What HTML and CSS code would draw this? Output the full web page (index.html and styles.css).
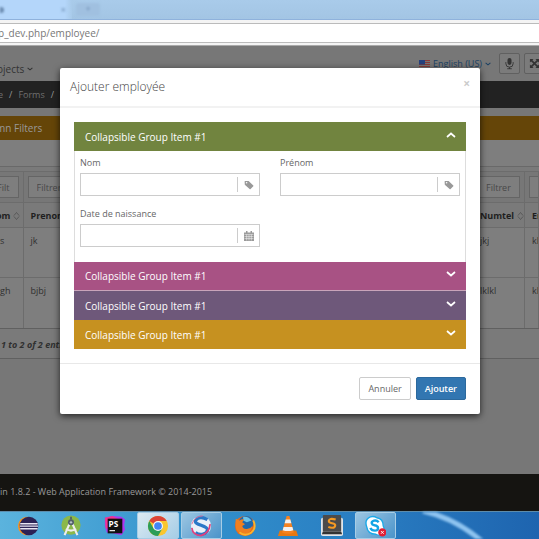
FILE: index.html
```html
<!DOCTYPE html>
<html lang="fr">
<head>
<meta charset="utf-8">
<title>Ajouter employée</title>
<link rel="stylesheet" href="styles.css">
</head>
<body>
<svg class="defs" aria-hidden="true">
  <symbol id="tag" viewBox="0 0 10 10"><path fill="currentColor" fill-rule="evenodd" d="M.6 1.6Q.6 1 1.2 1H4.6L9.3 5.4Q9.7 5.9 9.3 6.3L6.6 9Q6.1 9.4 5.6 9L.8 4.700ZM2.600 2A.8.8 0 1 0 2.600 3.600.8.8 0 0 0 2.600 2Z"/></symbol>
  <symbol id="down" viewBox="0 0 10 6"><path fill="none" stroke="currentColor" stroke-width="1.7" d="M1 1l4 3.5L9 1"/></symbol>
  <symbol id="sort" viewBox="0 0 8 10"><path fill="none" stroke="currentColor" stroke-width=".8" d="M1 4.500L4 1l3 3.500M1 5.500L4 9l3-3.500"/></symbol>
</svg>

<div class="tabs">
  <div class="tab"><span class="tab-icon"></span><span class="tab-close">×</span></div>
  <div class="new-tab">+</div>
</div>
<div class="address"><input aria-label="Adresse" value="pp_dev.php/employee/"></div>

<main class="page">
  <header class="top">
    <button class="projects">ojects <svg class="caret"><use href="#down"/></svg></button>
    <div class="tools">
      <a class="language" href="#">
        <svg class="flag" viewBox="0 0 11 8"><path fill="#777" d="M0 0h11v8H0z"/><path stroke="#8a3b38" d="M0 .5h11M0 2.500h11M0 4.500h11M0 6.500h11"/><path fill="#25417d" d="M0 0h6v4.500H0z"/></svg>
        <span>English (US)</span> <svg class="caret"><use href="#down"/></svg>
      </a>
      <button class="tool" aria-label="Microphone"><svg viewBox="0 0 12 14"><rect x="3.800" y="1" width="4.400" height="7.500" rx="2.200" fill="#333"/><path d="M2 5.500V7a4 4 0 0 0 8 0V5.500M6 11v2M3.500 12.700h5" fill="none" stroke="#333"/></svg></button>
      <button class="tool" aria-label="Plein écran"><svg viewBox="0 0 12 14"><path d="M2 3l8 8M10 3l-8 8" stroke="#333" stroke-width="1.800"/><path fill="#333" d="M1 2h4L1 6zM11 2v4L7 2zM1 12V8l4 4zM11 12H7l4-4z"/></svg></button>
    </div>
  </header>
  <nav class="crumbs"><a href="#">e</a><span>/</span><a href="#">Forms</a><span>/</span></nav>
  <h2 class="band">mn Filters</h2>
  <div class="search"></div>
  <table class="grid">
    <colgroup><col class="c-name"><col class="c-first"><col><col class="c-phone"><col class="c-mail"></colgroup>
    <thead>
      <tr class="filters">
        <td class="cut"><input aria-label="Filtrer nom" placeholder="Filt"></td>
        <td><input aria-label="Filtrer prénom" placeholder="Filtrer"></td>
        <td></td>
        <td><input aria-label="Filtrer numéro" placeholder="Filtrer"></td>
        <td><input aria-label="Filtrer email"></td>
      </tr>
      <tr class="titles">
        <th class="cut"><span>om<svg><use href="#sort"/></svg></span></th>
        <th><span>Prenom</span></th>
        <th></th>
        <th><span>Numtel<svg><use href="#sort"/></svg></span></th>
        <th><span>Em</span></th>
      </tr>
    </thead>
    <tbody>
      <tr><td class="cut">s</td><td>jk</td><td></td><td>jkj</td><td>kl</td></tr>
      <tr><td class="cut">gh</td><td>bjbj</td><td></td><td>lklkl</td><td>kl</td></tr>
    </tbody>
  </table>
  <div class="summary">1 to 2 of 2 entries</div>
  <footer class="copyright">in 1.8.2 - Web Application Framework © 2014-2015</footer>

  <div class="overlay">
    <form class="modal" role="dialog" aria-labelledby="title">
      <header class="modal-head">
        <h1 id="title">Ajouter employée</h1>
        <button type="button" class="close" aria-label="Fermer">×</button>
      </header>
      <div class="modal-body">
        <div class="accordion">
          <button type="button" class="item green" aria-expanded="true">Collapsible Group Item #1<svg class="chevron up"><use href="#down"/></svg></button>
          <div class="fields">
            <div class="field">
              <label for="nom">Nom</label>
              <div class="box"><input id="nom"><span class="addon"><svg><use href="#tag"/></svg></span></div>
            </div>
            <div class="field">
              <label for="prenom">Prénom</label>
              <div class="box"><input id="prenom"><span class="addon"><svg><use href="#tag"/></svg></span></div>
            </div>
            <div class="field">
              <label for="date">Date de naissance</label>
              <div class="box"><input id="date"><span class="addon"><svg viewBox="0 0 10 10"><path fill="currentColor" d="M0 1.500h2V0h1.500v1.500h3V0H8v1.500h2V10H0z"/><path stroke="#fff" stroke-width=".5" d="M.5 3.400h9M.5 5.600h9M.5 7.600h9M2.700 3.400v6.100M5 3.400v6.100M7.300 3.400v6.100"/></svg></span></div>
            </div>
          </div>
          <button type="button" class="item pink" aria-expanded="false">Collapsible Group Item #1<svg class="chevron"><use href="#down"/></svg></button>
          <button type="button" class="item purple" aria-expanded="false">Collapsible Group Item #1<svg class="chevron"><use href="#down"/></svg></button>
          <button type="button" class="item amber" aria-expanded="false">Collapsible Group Item #1<svg class="chevron"><use href="#down"/></svg></button>
        </div>
      </div>
      <footer class="modal-foot">
        <button type="button" class="btn">Annuler</button>
        <button type="submit" class="btn primary">Ajouter</button>
      </footer>
    </form>
  </div>
</main>

<div class="taskbar">
  <svg class="streak" viewBox="0 0 70 27" aria-hidden="true"><path d="M2-1Q34 6 62 30" fill="none" stroke="#8fc4f0" stroke-width="5"/></svg>
  <div class="apps">
    <button aria-label="Eclipse"><svg viewBox="0 0 24 24"><circle cx="11" cy="12" r="10" fill="#f7941e"/><circle cx="13" cy="12" r="10.200" fill="#2c2255"/><path stroke="#e8e4f2" stroke-width="1.500" d="M3.500 9.500h19M3 12.200h20M3.500 15h19"/></svg></button>
    <button aria-label="Android Studio"><svg viewBox="0 0 24 24"><circle cx="12" cy="11" r="10.500" fill="#8bb84a"/><path d="M12 6L5 22M12 6l7 16M6.500 15q5.500 4 11 0" fill="none" stroke="#eee" stroke-width="2.300"/><circle cx="12" cy="8" r="3.300" fill="#53606b"/><circle cx="12" cy="8" r="1.300" fill="#b8c4c8"/><path d="M12 2v3" stroke="#53606b" stroke-width="2"/></svg></button>
    <button aria-label="PhpStorm"><svg viewBox="0 0 24 24"><path fill="#b035f0" d="M1 3l8-2 10 1 4 3-1 6 1 5-4 6-9-2-7-1L1 12z"/><path fill="#f0358f" d="M1 3l8-2 6 3-9 9-4 2z"/><path fill="#111" d="M4 4h16v16H4z"/><text x="5" y="13" class="ps">PS</text><path fill="#fff" d="M6 16.500h6v1.200H6z"/></svg></button>
    <button class="open" aria-label="Chrome"><svg viewBox="0 0 24 24"><circle cx="12" cy="12" r="11" fill="#f9c62f"/><path fill="#dc4437" d="M12 12L2.500 6.500A11 11 0 0 1 21.500 6.500H12z"/><path fill="#2c9d58" d="M2.500 6.500A11 11 0 0 0 12 23l4.800-8.200L12 12 7.200 14.800z"/><circle cx="12" cy="12" r="5.500" fill="#f5f5f5"/><circle cx="12" cy="12" r="4.200" fill="#4285f4"/></svg></button>
    <button class="open soft" aria-label="Navigateur"><svg viewBox="0 0 24 24"><circle cx="12" cy="12" r="11" fill="#e9f0f8"/><path d="M19 5Q10 0 6 6c-2 5 13 5 13 10 0 5-8 7-13 3" fill="none" stroke="#2a78c8" stroke-width="3.500"/><path d="M2 14Q3 22 12 22.500 21 20 22 10" fill="none" stroke="#e0407d" stroke-width="1.800"/><path d="M2 10Q5 1 14 1" fill="none" stroke="#e0709a"/></svg></button>
    <button aria-label="Firefox"><svg viewBox="0 0 24 24"><circle cx="12" cy="12" r="11" fill="#e8681a"/><circle cx="13" cy="9" r="8" fill="#1f69ad"/><path fill="#6ac2e8" d="M10 2q6-1 9 4l-5 2-4-2z"/><path fill="#f08020" d="M2 4l4 2q3-2 5-1L9 8l3 2-3 2q1 4 6 3 3 0 5-3-1 7-7 9-6 1-10-4Q1 12 2 4z"/><path d="M21 6q4 8-2 13-7 5-13 0" fill="none" stroke="#f9b42d" stroke-width="2"/></svg></button>
    <button aria-label="VLC"><svg viewBox="0 0 24 24"><path fill="#e87810" d="M3 17h18l2 6H1z"/><path fill="#f58220" d="M10.500 1h3l5 18q-6.500 3-13 0z"/><path fill="#f1f1f1" d="M9.500 5h5l1.200 4H8.300zM7.200 13h9.600l1 3.500q-6 2-11.600 0z"/></svg></button>
    <button aria-label="Sublime Text"><svg viewBox="0 0 24 24"><rect x="0" y="3" width="24" height="20" rx="2" fill="#e2e5e8"/><rect x="2" y="0" width="20" height="18" rx="1" fill="#4b4b4b"/><path fill="#333" d="M2 18h20l1 3H1z"/><path d="M16 5Q9 3 8.500 6.500C8.500 10 16 8 15.500 11.500 15 15 10 14 8 13" fill="none" stroke="#f59a23" stroke-width="2.300"/></svg></button>
    <button class="open soft" aria-label="Skype"><svg viewBox="0 0 24 24"><path fill="#fff" stroke="#1aa9e8" stroke-width="1.500" d="M7 2q4-1 7 1 7 1 7 9 3 6-1 9-3 2-7 0-9 0-10-8-3-8 4-11z"/><path d="M16 8Q14 5.500 11 6.200C7 7.500 8 10.500 11.500 11.200 17 12 16 17 12 17q-4 0-5-3" fill="none" stroke="#13a5e5" stroke-width="2.600"/><circle cx="20" cy="19" r="4.500" fill="#e21f35"/><path d="M18.500 17.500l3 3M21.500 17.500l-3 3" stroke="#fff"/></svg></button>
  </div>
</div>
</body>
</html>
```
FILE: styles.css
```css
* { box-sizing: border-box; }
body {
  margin: 0;
  min-height: 100vh;
  display: flex;
  flex-direction: column;
  overflow: hidden;
  font: 9px/14px "Open Sans", sans-serif;
  color: #666;
}
button, input { font: inherit; color: inherit; margin: 0; border-radius: 0; }
button { cursor: pointer; }
a { color: inherit; text-decoration: none; }
svg { display: block; flex: none; }
.defs { display: none; }

.tabs {
  height: 20px;
  display: flex;
  background: linear-gradient(#a9cbea, #a3c5e4);
  border-bottom: 1px solid #8fb2dc;
}
.tab {
  width: 72px;
  display: flex;
  align-items: center;
  justify-content: space-between;
  padding-right: 6px;
  background: linear-gradient(90deg, #b4d6fa 90%, #a8cae9);
}
.tab-icon { width: 4px; height: 6px; background: #6b8cb0; border-radius: 0 3px 3px 0; filter: blur(1px); }
.tab-close, .new-tab { color: #6d8eb3; filter: blur(1px); }
.new-tab { width: 24px; margin: 3px 4px; text-align: center; line-height: 12px; background: #a0c0e0; border-radius: 3px; }

.address {
  height: 26px;
  padding: 3px 0;
  background: #f4f4f4;
  border-bottom: 1px solid #aaa;
}
.address input {
  display: block;
  width: 100%;
  height: 20px;
  padding: 0;
  text-indent: -8px;
  border: solid #bbb;
  border-width: 1px 0;
  background: #fff;
  font-size: 10px;
  color: #777;
}

.page {
  position: relative;
  flex: 1;
  display: flex;
  flex-direction: column;
  background: #777;
}
.top {
  height: 35px;
  display: flex;
  align-items: center;
  justify-content: space-between;
}
.projects {
  display: flex;
  align-items: center;
  gap: 3px;
  margin-left: -3px;
  padding: 10px 0 0;
  border: 0;
  background: none;
  font-size: 10px;
  color: #333;
}
.caret { width: 6px; height: 4px; }
.tools { display: flex; align-items: center; gap: 4px; margin-right: -6px; }
.language { display: flex; align-items: center; gap: 3px; margin-right: 4px; color: #1c4163; }
.flag { width: 11px; height: 8px; }
.tool {
  width: 21px;
  height: 21px;
  display: grid;
  place-items: center;
  padding: 0;
  border: 1px solid #606060;
  border-radius: 2px;
  background: #7b7b7b;
}
.tool svg { width: 11px; height: 13px; }
.crumbs {
  height: 27px;
  display: flex;
  align-items: center;
  gap: 6px;
  margin: 0 0 8px -2px;
  background: #222;
  color: #707070;
}
.crumbs span { color: #999; }
.band {
  height: 24px;
  margin: 0;
  text-indent: -4px;
  background: #654508;
  color: #999;
  font-size: 10px;
  font-weight: 400;
  line-height: 24px;
}
.search { height: 31px; background: linear-gradient(#7e7e7e 26px, #696969 26px, #696969 27px, #7a7a7a 27px); }

.grid {
  width: 100%;
  table-layout: fixed;
  border-collapse: collapse;
  background: #7e7e7e;
  color: #303030;
}
.c-name { width: 23px; }
.c-first { width: 100px; }
.c-phone { width: 52px; }
.c-mail { width: 14px; }
.grid td, .grid th {
  padding: 6px 0 0 7px;
  border: solid #6c6c6c;
  border-width: 1px 1px 0 0;
  text-align: left;
  vertical-align: top;
  overflow: hidden;
  white-space: nowrap;
}
.grid .cut { padding-left: 0; }
.grid tbody tr { height: 50px; }
.grid .filters { height: 31px; background: #777; }
.grid .filters td { padding: 4px 4px 4px 4px; }
.grid .filters .cut { padding-left: 0; }
.filters input {
  display: block;
  width: 100%;
  height: 22px;
  padding: 0 0 0 8px;
  border: 1px solid #656565;
  background: #7e7e7e;
}
.filters .cut input { padding: 0; border-left: 0; text-indent: -3px; }
.filters ::placeholder { color: #484848; opacity: 1; }
.grid .titles { height: 25px; background: #7a7a7a; }
.titles span { display: flex; align-items: center; gap: 3px; color: #1f1f1f; }
.titles .cut span { margin-left: -4px; }
.titles svg { width: 7px; height: 10px; color: #4c4c4c; }
.summary {
  height: 31px;
  border: solid #606060;
  border-width: 1px 0;
  padding: 9px 0 0 1px;
  background: #7a7a7a;
  color: #303030;
  font-weight: 700;
  font-style: italic;
}
.copyright {
  height: 37px;
  margin-top: auto;
  background: #151411;
  color: #999;
  line-height: 36px;
}

.overlay { position: absolute; inset: 0; padding: 22px 59px 0 60px; }
.modal {
  background: #fff;
  border-radius: 2px;
  box-shadow: 0 2px 7px rgba(0, 0, 0, .7);
}
.modal-head {
  height: 40px;
  display: flex;
  align-items: center;
  justify-content: space-between;
  padding: 0 10px;
  border-bottom: 2px solid #f2f2f2;
}
.modal-head h1 { margin: 0; font-size: 12px; font-weight: 300; color: #444; }
.close { padding: 0 0 6px; border: 0; background: none; font-size: 12px; font-weight: 700; color: #ccc; }
.modal-body { padding: 14px; }
.item {
  display: flex;
  align-items: center;
  justify-content: space-between;
  width: 100%;
  height: 29px;
  padding: 0 10px 0 11px;
  border: 0;
  color: #fff;
  font-size: 10px;
  text-align: left;
}
.chevron { width: 10px; height: 6px; margin-bottom: 4px; }
.up { transform: rotate(180deg); }
.green { background: #71843f; }
.pink { background: #a85284; border-bottom: 1px solid #c9a4ba; }
.purple { background: #6e587a; }
.amber { background: #c69120; }
.fields {
  display: grid;
  grid-template-columns: 1fr 1fr;
  gap: 10px 20px;
  padding: 4px 5px 15px;
  border: solid #ddd;
  border-width: 0 1px;
}
.field label { display: block; height: 18px; line-height: 16px; }
.box { display: flex; align-items: center; height: 23px; border: 1px solid #ccc; }
.box input { flex: 1; min-width: 0; height: 21px; padding: 0 6px; border: 0; background: none; }
.addon { width: 22px; height: 15px; display: grid; place-items: center; border-left: 1px solid #ccc; color: #999; }
.addon svg { width: 10px; height: 10px; }
.modal-foot {
  display: flex;
  justify-content: flex-end;
  gap: 5px;
  padding: 13px 14px 14px;
  border-top: 1px solid #e8e8e8;
}
.btn {
  height: 23px;
  padding: 0 8px;
  border: 1px solid #ccc;
  border-radius: 2px;
  background: #fff;
}
.primary { border-color: #2c699d; background: #3276b1; color: #fff; font-weight: 600; }

.taskbar {
  position: relative;
  height: 28px;
  padding-left: 6px;
  border-top: 1px solid #5d8cab;
  background: linear-gradient(90deg, #5bb3dd, #3291cc 35%, #2a7fc3 65%, #1e64af);
}
.streak { position: absolute; right: 48px; top: 0; height: 100%; width: 70px; filter: blur(1px); }
.apps { height: 27px; max-width: 391px; display: grid; grid-template-columns: repeat(9, 1fr); }
.apps button { display: grid; place-items: center; margin: 0 1px; padding: 0; border: 1px solid transparent; background: none; }
.apps svg { width: 22px; height: 22px; }
.apps .open { border-color: #a7cde5; border-radius: 2px; background: linear-gradient(135deg, #dceaf2, #a5cde6); }
.apps .soft { background: linear-gradient(135deg, #9cc6e2, #4b94ca); }
.ps { font: 700 9px "Open Sans", sans-serif; fill: #fff; }
```
